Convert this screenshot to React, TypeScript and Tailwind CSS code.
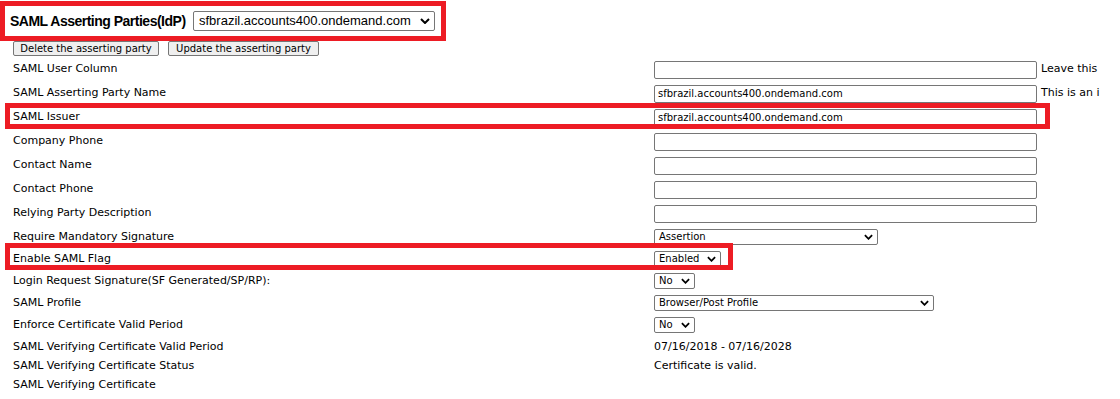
import React from "react";

const RED = "border-[#ed1c24]";

function Chevron({ w = 9 }: { w?: number }) {
  return (
    <svg width={w} height={6} viewBox="0 0 10 6" className="pointer-events-none absolute right-[5px] top-1/2 -translate-y-1/2">
      <polyline points="1,1 5,5 9,1" fill="none" stroke="#000" strokeWidth="2" />
    </svg>
  );
}

function Select({ value, width, big }: { value: string; width: string; big?: boolean }) {
  return (
    <div className={`relative ${width}`}>
      <div
        className={
          big
            ? "h-[20px] w-full border border-[#767676] rounded-[2px] pl-[5px] text-[13px] leading-[18px] font-['Liberation_Sans'] bg-white whitespace-nowrap"
            : "h-[16px] w-full border border-[#767676] rounded-[2px] pl-[4px] text-[10px] leading-[14px] bg-white whitespace-nowrap"
        }
      >
        {value}
      </div>
      <Chevron w={big ? 10 : 9} />
    </div>
  );
}

function TextInput({ value = "" }: { value?: string }) {
  return (
    <div className="h-[18px] w-[383px] border border-[#767676] rounded-[2px] px-[3px] text-[10px] leading-[16px] bg-white">
      {value}
    </div>
  );
}

const inputRows = [
  { label: "SAML User Column", value: "", note: "Leave this" },
  { label: "SAML Asserting Party Name", value: "sfbrazil.accounts400.ondemand.com", note: "This is an i" },
  { label: "SAML Issuer", value: "sfbrazil.accounts400.ondemand.com", mark: true },
  { label: "Company Phone" },
  { label: "Contact Name" },
  { label: "Contact Phone" },
  { label: "Relying Party Description" },
];

const selectRows = [
  { label: "Require Mandatory Signature", value: "Assertion", width: "w-[224px]" },
  { label: "Enable SAML Flag", value: "Enabled", width: "w-[67px]", mark: true },
  { label: "Login Request Signature(SF Generated/SP/RP):", value: "No", width: "w-[41px]" },
  { label: "SAML Profile", value: "Browser/Post Profile", width: "w-[280px]" },
  { label: "Enforce Certificate Valid Period", value: "No", width: "w-[41px]" },
];

export default function App() {
  return (
    <div className="w-[1120px] h-[399px] bg-white overflow-hidden font-['DejaVu_Sans'] text-[11px] text-black">
      <div className="w-[1100px] overflow-hidden">
        <div className={`mt-[1px] w-[446px] h-[40px] border-[5px] ${RED} flex items-center pl-[5px]`}>
          <span className="font-['Liberation_Sans'] font-bold text-[14px] tracking-[-0.5px] w-[178px] whitespace-nowrap">
            SAML Asserting Parties(IdP)
          </span>
          <div className="ml-[5px]">
            <Select value="sfbrazil.accounts400.ondemand.com" width="w-[242px]" big />
          </div>
        </div>

        <div className="flex gap-[9px] pl-[13px] h-[15px]">
          <button className="h-[15px] w-[146px] bg-[#efefef] border border-[#767676] rounded-[2px] text-[10px] leading-[13px]">
            Delete the asserting party
          </button>
          <button className="h-[15px] w-[151px] bg-[#efefef] border border-[#767676] rounded-[2px] text-[10px] leading-[13px]">
            Update the asserting party
          </button>
        </div>

        <div className="mt-[2px]">
          {inputRows.map((r) => (
            <div key={r.label} className="relative flex items-center h-[24px] pl-[13px]">
              <div className="w-[641px] whitespace-nowrap pb-[2px]">{r.label}</div>
              <TextInput value={r.value} />
              {r.note && <span className="ml-[4px] whitespace-nowrap pb-[2px]">{r.note}</span>}
              {r.mark && (
                <div className={`absolute left-[5px] top-[-3px] w-[1045px] h-[26px] border-[5px] ${RED}`} />
              )}
            </div>
          ))}

          {selectRows.map((r) => (
            <div key={r.label} className="relative flex items-center h-[22px] pl-[13px]">
              <div className="w-[641px] whitespace-nowrap">{r.label}</div>
              <Select value={r.value} width={r.width} />
              {r.mark && (
                <div className={`absolute left-[5px] top-[-5px] w-[728px] h-[27px] border-[5px] ${RED}`} />
              )}
            </div>
          ))}

          <div className="flex items-center h-[21px] pl-[13px] pt-[1px]">
            <div className="w-[641px]">SAML Verifying Certificate Valid Period</div>
            <span>07/16/2018 - 07/16/2028</span>
          </div>
          <div className="flex items-center h-[19px] pl-[13px]">
            <div className="w-[641px]">SAML Verifying Certificate Status</div>
            <span>Certificate is valid.</span>
          </div>
          <div className="flex items-center h-[19px] pl-[13px]">
            <div className="w-[641px]">SAML Verifying Certificate</div>
          </div>
        </div>
      </div>
    </div>
  );
}
